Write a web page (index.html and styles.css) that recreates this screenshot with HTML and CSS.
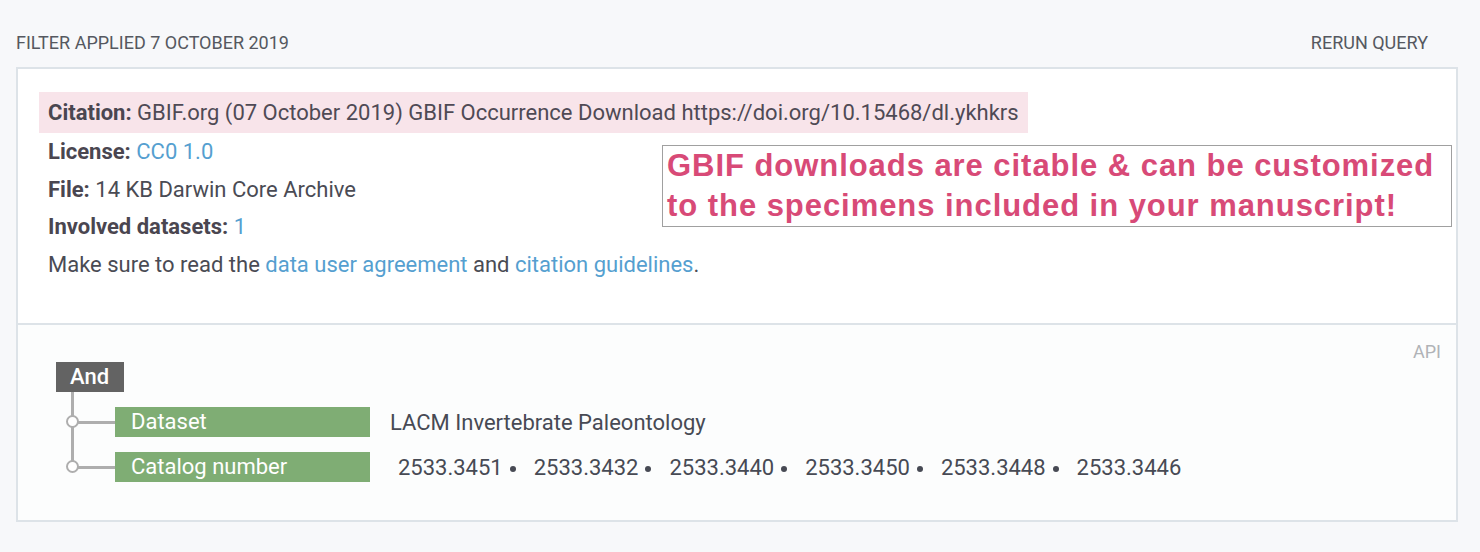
FILE: index.html
```html
<!DOCTYPE html>
<html>
<head>
<meta charset="utf-8">
<link rel="stylesheet" href="styles.css">
</head>
<body>
<div class="page">
  <div class="header">
    <span class="header-title">FILTER APPLIED 7 OCTOBER 2019</span>
    <span class="header-action">RERUN QUERY</span>
  </div>
  <div class="card">
    <div class="info">
      <div class="citation"><b>Citation:</b> GBIF.org (07 October 2019) GBIF Occurrence Download https://doi.org/10.15468/dl.ykhkrs</div>
      <div class="line"><b>License:</b> <a class="link">CC0 1.0</a></div>
      <div class="line"><b>File:</b> 14 KB Darwin Core Archive</div>
      <div class="line"><b>Involved datasets:</b> <a class="link">1</a></div>
      <div class="line">Make sure to read the <a class="link">data user agreement</a> and <a class="link">citation guidelines</a>.</div>
      <div class="annotation">GBIF downloads are citable &amp; can be customized<br>to the specimens included in your manuscript!</div>
    </div>
    <div class="query">
      <div class="api">API</div>
      <div class="tree">
        <div class="op">And</div>
        <div class="branches">
          <div class="branch">
            <span class="node"></span>
            <div class="field">Dataset</div>
            <div class="values">LACM Invertebrate Paleontology</div>
          </div>
          <div class="branch">
            <span class="node"></span>
            <div class="field">Catalog number</div>
            <div class="values nums">
              <span class="num">2533.3451</span>
              <span class="num">2533.3432</span>
              <span class="num">2533.3440</span>
              <span class="num">2533.3450</span>
              <span class="num">2533.3448</span>
              <span class="num">2533.3446</span>
            </div>
          </div>
        </div>
      </div>
    </div>
  </div>
</div>
</body>
</html>
```

FILE: styles.css
```css
html, body {
  margin: 0;
  padding: 0;
  background: #f7f8fa;
}
body {
  font-family: Roboto, "Liberation Sans", sans-serif;
  color: #4a4b54;
  width: 1480px;
  height: 552px;
  overflow: hidden;
}
.page {
  padding: 31px 22px 0 16px;
}
.header {
  display: flex;
  justify-content: space-between;
  align-items: center;
  height: 22px;
  font-size: 18px;
  color: #555860;
  margin-bottom: 14px;
}
.header-action {
  margin-right: 30px;
}
.card {
  border: 2px solid #dde3e8;
  background: #fff;
  height: 451px;
  display: flex;
  flex-direction: column;
}
.info {
  position: relative;
  padding: 23px 21px 0 21px;
  height: 256px;
  box-sizing: border-box;
  font-size: 22px;
  border-bottom: 2px solid #dde3e8;
}
.info b {
  font-weight: 700;
  color: #4a4650;
}
.citation {
  display: inline-block;
  background: #f8e4ea;
  padding: 0 9px;
  line-height: 41px;
  color: #4f4a55;
}
.line {
  padding-left: 9px;
  line-height: 37.5px;
}
.link {
  color: #559fd0;
  text-decoration: none;
}
.annotation {
  position: absolute;
  left: 644px;
  top: 76px;
  width: 790px;
  height: 82px;
  box-sizing: border-box;
  border: 1px solid #a0a0a0;
  padding: 0 0 0 4px;
  font-family: "Liberation Sans", Arial, sans-serif;
  font-weight: 700;
  font-size: 31px;
  letter-spacing: 0.95px;
  line-height: 40px;
  color: #d84a77;
  background: #fff;
  white-space: nowrap;
}
.query {
  flex: 1;
  position: relative;
  background: #fcfdfd;
  padding: 37px 0 0 38px;
}
.api {
  position: absolute;
  right: 15px;
  top: 16px;
  font-size: 18px;
  color: #b0b3b7;
}
.tree {
  display: flex;
  flex-direction: column;
  align-items: flex-start;
}
.op {
  background: #636363;
  color: #fff;
  font-size: 22px;
  font-weight: 500;
  height: 30px;
  line-height: 30px;
  padding: 0 14px;
  width: 40px;
}
.branches {
  position: relative;
  margin-left: 15px;
  padding-top: 15px;
  display: flex;
  flex-direction: column;
  gap: 15px;
}
.branches::before {
  content: "";
  position: absolute;
  left: 0;
  top: 0;
  width: 3px;
  height: 75px;
  background: #aeaeae;
}
.branch {
  display: flex;
  align-items: center;
  position: relative;
  padding-left: 44px;
  height: 30px;
}
.branch::before {
  content: "";
  position: absolute;
  left: 2px;
  top: 14px;
  width: 44px;
  height: 3px;
  background: #aeaeae;
}
.node {
  position: absolute;
  left: -5px;
  top: 8px;
  width: 9px;
  height: 9px;
  border: 2.5px solid #aeaeae;
  border-radius: 50%;
  background: #fff;
  z-index: 1;
}
.field {
  position: relative;
  background: #7fad74;
  color: #fff;
  width: 255px;
  height: 30px;
  line-height: 30px;
  box-sizing: border-box;
  padding-left: 16px;
  font-size: 22px;
}
.values {
  margin-left: 20px;
  font-size: 22px;
  color: #474a54;
}
.nums {
  display: flex;
  align-items: center;
  margin-left: 28px;
}
.num {
  display: inline-flex;
  align-items: center;
}
.num::after {
  content: "";
  width: 6px;
  height: 6px;
  border-radius: 50%;
  background: #474a54;
  margin: 4px 18px 0 7px;
}
.num:last-child::after {
  content: none;
}
```
